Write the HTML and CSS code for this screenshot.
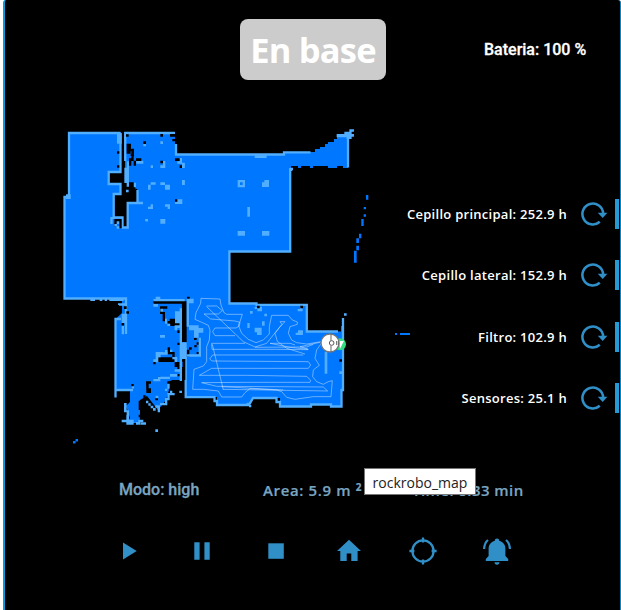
FILE: index.html
```html
<!DOCTYPE html>
<html lang="es">
<head>
<meta charset="utf-8">
<title>rockrobo</title>
<link rel="stylesheet" href="styles.css">
</head>
<body>
<svg class="defs" aria-hidden="true">
  <symbol id="reload" viewBox="0 0 28 28">
    <path d="M19.800 21.700A10.400 10.400 0 1 1 23.200 13.500" fill="none" stroke="currentColor" stroke-width="2.500"/>
    <path d="M17.800 12.800h9.600l-4.700 5.200z" fill="currentColor"/>
  </symbol>
</svg>
<main class="card">
  <header class="header">
    <div class="state"><span>En base</span></div>
    <div class="battery">Bateria: 100 %</div>
  </header>

  <section class="body">
    <svg class="map" viewBox="55 120 345 330" role="img">
      <path class="floor" d="M69 132H121V172H109V184H121V194H114V218H123V227H128V203H138V190L131 185 128 180H125V132H175V154H284V152H315V149H320V147H325V144H328V142H334V139H337V136H348V168H343V166H337V168H328V166H313V168H310V166H301V168H298V166H291V252H229.500V303.500H257V305H307V331.500H341V326H343V390H341V406.500H331V404.500H312V406.500H280V398H253L249 404.500H217V397H185.500V367H181V380H115.500V319L122 313V298H64.500V197H69Z"/>
      <path class="floor" d="M115.500 319V390H130V402L126 406 130 418 127 423H139L140 418V400L147 396 158 410 166 400 169 390 168 382 181 376V370Z"/>
      <!-- Walls -->
      <path class="wall" d="M120.500 133H69V197H64.500V298.500H126V334M118 304.500h8M120.500 133V172H108.700V184H120.500V194H113.700V219M111.500 217V224M113 217.500H122.500V227.500H127.700V203H143M137.500 190V203M125.200 161V133H175M176 144V154.500H284V152.300H310.500M348 167.500V137M291 171V169H293M290.200 168V251.500H229.400V303.500H256.500V304.800H306.800V331.500H338M343 318V390H341.500V406.500H331V404.500H311V406.500H280V402H276.500V398H253L249 405H217V401H214.500V397.200H185.700V348M115.500 397.500V319H121M115.500 390H133"/>
      <!-- Entrance hall -->
      <g transform="translate(55 120) scale(.3333)">
        <path class="light" d="M186 40h14v31h-14zM208 143h14v46h-14zM215 184h7v16h-7zM215 124h7v22h-7zM33 223h14v14H33zM213 209h8v8h-8zM236 188h7v20h-7zM222 86h8v8h-8zM244 122h21v9h-21zM265 71h8v8h-8zM316 64h8v8h-8zM324 123h7v21h-15v-8h8zM287 136h7v8h-7zM374 114h7v14h8v15h-8v-12h-14v-7h7zM287 187h15v7h-15zM279 194h8v15h-8zM316 187h14v8h-14zM330 194h15v15h-15zM381 180h8v15h-8zM367 238h15v14h-22v-7h7zM287 253h7v14h-15v-7h8zM330 253h15v14h-7v-7h-8zM271 297h8v7h-8z"/>
        <path class="void" d="M186 94h7v7h-7zM186 136h7v7h-7zM213 43h8v7h-8zM316 42h8v8h-8zM265 64h8v8h-8zM345 42h15v8h-15zM352 57h8v7h-8zM215 71h13v15h7v8h-8v14h9v14h7v15h-7v-14h-7v14h-7v-22h7v-14h-14zM229 86h8v23h-8zM243 115h16v8h-16zM316 122h8v8h-8zM360 115h14v8h-14zM374 136h7v8h-7zM222 187h14v15h-14zM222 202h20v40h-20zM360 238h7v7h-7z"/>
      </g>
      <!-- Corridor column -->
      <g transform="translate(55 200) scale(.3333)">
        <path class="light" d="M316 57h15v14h-15zM271 57h8v7h-8zM106 296h14v7h-14zM134 296h8v7h-8zM149 296h7v7h-7zM163 296h43v7h-43z"/>
        <path class="void" d="M178 57h22v14h-22zM178 71h7v8h-7zM193 71h7v14h-7z"/>
        <path class="light" d="M185 64h8v8h-8zM178 72h8v7h-8zM185 79h8v7h-8z"/>
      </g>
      <!-- Living room -->
      <g transform="translate(180 120) scale(.3333)">
        <path class="light" d="M224 106h36v8h-36zM173 180h22v22h-22zM253 180h14v21h-21v-14h7zM202 261h8v29h-8zM173 333h22v14h-22zM246 333h22v14h-22zM0 115h6v14h8v15H6v-14H0zM6 180h8v15H6zM470 42h23v-7h15v-7h14v7h-7v7h7v8h-7v7h-15v-5h-30z"/>
        <path class="floor" d="M180 187h8v8h-8zM558 225h7v14h-7zM551 261h7v7h-7zM551 283h7v7h-7zM544 297h7v21h-7zM537 341h7v14h-7zM529 355h8v14h-8zM529 377h8v14h-8zM522 392h8v36h-8z"/>
      </g>
      <!-- Bathroom -->
      <g transform="translate(100 290) scale(.3333)">
        <path class="void" d="M160 30h86v10h-86zM162 33h92v8h-92zM246 34h14v123h-14zM248 205h8v65h-8zM45 45h12v22h-6v14h-9zM180 49h22v7h-14v10h7v21h7v7h-14V72h-8zM202 93h7v-7h30v22h-28v-7h-9zM174 202h50v14h-50zM203 172h7v14h14v15h-7v-8h-14v-7h-7v-7h7zM224 216h15v22h-7v-7h-8zM260 179h8v22h-8zM267 172h8v7h-8zM282 143h8v7h-8zM290 157h7v7h-7zM290 186h7v7h-7zM283 165h7v7h-7zM261 20h8v7h-8zM79 64h8v7h-8zM65 99h7v8h-7zM72 49h8v8h-8zM232 121h8v8h-8zM232 158h8v7h-8zM246 165h8v7h-8zM246 208h8v7h-8zM160 216h7v7h-7zM232 252h8v7h-8zM174 260h7v7h-7zM138 274h15v7h-7v14h7v14h-14zM130 316h7v15h-7zM116 332h8v28h-8zM124 338h7v22h-7zM166 324h8v7h-8zM116 374h8v8h-8zM94 282h7v14h-7zM202 274h7v8h-7z"/>
        <path class="light" d="M160 27h94v7h-94zM160 42h14v8h66v50h-15V64h14V50h-79zM167 20h14v8h-14zM239 55h7v218h-7zM246 157h14v50h-14zM260 26h21v14h-14v70h-7zM267 106h29v8h14v14h-14v15h-14v-22h-15zM296 143h7v57h-42v-7h35zM181 56h8v9h-8zM195 86h7v15h-7zM202 101h8v7h-8zM224 106h15v8h-7v7h-8zM180 135h15v8h-15zM195 179h8v8h-8zM167 186h22v7h-7v9h-7v15h-8zM160 208h8v8h-8zM210 179h7v7h-7zM181 187h22v7h-22zM217 201h15v15h-8v-8h-7zM224 238h15v7h-15zM210 252h22v8h-22v7h-29v7h-21v-7h14v-7h36zM202 281h7v15h-7zM195 296h7v7h-7zM210 302h7v7h7v7h-15v15h-7v15h-22v21h-7v-14h-7v-7h14v-7h15v-15h7v-15h8zM138 332h7v8h7v7h8v7h7v8h-8v-7h-7v-8h-7v-7h-7zM72 339h8v22h7v14h-7v-8h-8zM79 374h8v15h14v7h14v-7h15v7h-8v8h-14v-7h-7v7H79v-7H65v-8h14zM123 397h15v7h-15zM166 418h8v8h-8zM238 302h8v7h-8zM65 71h15v28H65zM65 107h7v26h-7zM94 289h8v7h-8zM167 317h8v8h-8z"/>
      </g>
      <!-- Bedroom -->
      <g transform="translate(180 290) scale(.3333)">
        <path class="light" d="M210 63h8v8h-8zM253 71h8v8h-8zM224 50h22v14h-14v-7h-8zM360 50h8v14h-15v-7h7zM202 99h7v15h-7zM246 94h8v13h-8zM224 113h21v22h-14v-8h-7zM354 121h15v14h-22v-7h7zM434 185h8v66h-8zM492 70h8v7h-8zM478 244h8v8h-8zM200 345h14v7h-7v-14h-7z"/>
        <path class="void" d="M231 47h8v8h-8zM361 47h8v8h-8zM478 208h8v7h-8z"/>
        <path class="route" d="M63 25 62 40 48 68 45 88 65 97 85 106 90 120 88 150 80 170V215L70 228 42 238 40 270 38 298H70L115 303 125 321H185L195 308 210 296 290 300 305 305 320 322 345 328 400 320H453L457 272 445 275 430 283 410 275 398 260 400 240 418 226 405 205 410 180 424 160M63 25 120 27 123 45 132 68 140 73H187L180 95 175 105 185 130 205 148 228 158 250 150 268 132 268 110 275 76H325L337 90 352 96V103L330 110 325 130 335 150 350 158 380 162 424 155M80 50 190 155 225 171 260 160 300 110 315 95H300L306 103 285 130 292 154 320 175 375 192M80 48H110L127 62 115 72H72L92 87 165 93 180 97 178 108 168 114H105L98 125 105 137H165M195 160H95L96 178H290L384 179M270 160 330 172 385 178 360 170 420 157M97 163 130 300M225 172 380 171 400 163M270 160H330L345 165M98 195H370M98 195 89 207 96 213 385 215 392 225 385 235H95L58 256H200L380 259 392 271 390 277H200L65 278 110 289 430 291 443 303 130 298M125 290 310 300"/>
        <circle class="dock" cx="480" cy="163" r="18"/>
        <path d="M478 154l14-2-12 25" fill="#fff"/>
        <circle cx="450" cy="159" r="27" fill="#fff" stroke="#777" stroke-width="4"/>
        <path d="M453 133v19M453 167v18M470 153v12M475 153v12" fill="none" stroke="#666" stroke-width="3"/>
        <circle cx="455" cy="159" r="7" fill="#fff" stroke="#555" stroke-width="3"/>
      </g>
      <path class="floor" d="M395 333h2v2h-2zM73 441h2.500v2.500h-2.500zM75.500 439h2.500v2.500h-2.500z"/>
      <path class="floor" d="M400 333h10v2h-10z"/>
    </svg>

    <ul class="parts">
      <li><span>Cepillo principal: 252.9 h</span><svg><use href="#reload"/></svg><i></i></li>
      <li><span>Cepillo lateral: 152.9 h</span><svg><use href="#reload"/></svg><i></i></li>
      <li><span>Filtro: 102.9 h</span><svg><use href="#reload"/></svg><i></i></li>
      <li><span>Sensores: 25.1 h</span><svg><use href="#reload"/></svg><i></i></li>
    </ul>
  </section>

  <section class="stats">
    <div class="mode">Modo: high</div>
    <div class="area">Area: 5.9 m <sup>2</sup></div>
    <div class="time">Time: 8.33 min</div>
  </section>

  <nav class="controls">
    <svg viewBox="0 0 28 28"><path d="M9 5.500v17L22.700 14z"/></svg>
    <svg viewBox="0 0 28 28"><path d="M6.300 5.200h5.300v17.600H6.300zM16.400 5.200h5.300v17.600h-5.300z"/></svg>
    <svg viewBox="0 0 28 28"><path d="M6.300 6.300h15.500v15.500H6.300z"/></svg>
    <svg viewBox="0 0 28 28"><path d="M14 2.800 26 13.900h-3.400V24h-6.300v-7.600h-4.600V24H5.300V13.900H2z"/></svg>
    <svg viewBox="0 0 28 28"><g fill="none" stroke="currentColor" stroke-width="2.300"><circle cx="14" cy="14" r="10.600"/><path d="M14 .4v5M14 22.600v5M.4 14h5M22.600 14h5"/></g></svg>
    <svg viewBox="0 0 28 28"><path d="M14 1.500c1.300 0 2.200.9 2.200 2.200 4 1.100 6.200 4.100 6.200 8v7.200l2.800 3v2.200H2.800v-2.200l2.800-3v-7.200c0-3.900 2.300-6.900 6.200-8 0-1.300.9-2.200 2.200-2.200zM11.500 25.300h5c0 1.400-1 2.400-2.500 2.400s-2.500-1-2.500-2.400z"/><path d="M5 3C2.500 5 1.200 8 1.100 12M23 3c2.500 2 3.800 5 3.900 9" fill="none" stroke="currentColor" stroke-width="2.200"/></svg>
  </nav>
  <div class="tooltip">rockrobo_map</div>
</main>
</body>
</html>
```

FILE: styles.css
```css
* { box-sizing: border-box; }
body {
  margin: 0;
  background: #fff;
  font-family: "Open Sans", "Noto Sans", sans-serif;
  overflow: hidden;
}
.defs { position: absolute; width: 0; height: 0; }
.card {
  position: relative;
  height: 610px;
  margin-left: 3px;
  background: #000;
  border-left: 2px solid #0a9ad9;
  border-right: 1px solid #0a86c4;
  border-radius: 3px 3px 0 0;
}
.header {
  display: grid;
  grid-template-columns: 1fr 146px 1fr;
  height: 120px;
  padding: 19px 0 0 1px;
}
.state {
  grid-column: 2;
  display: flex;
  align-items: center;
  justify-content: center;
  height: 61px;
  border-radius: 8px;
  background: #ccc;
  color: #fff;
  font-size: 34.500px;
  font-weight: 700;
  letter-spacing: -0.800px;
  white-space: nowrap;
}
.battery {
  height: 61px;
  padding-left: 98px;
  color: #fff;
  font: 500 16px/61px Roboto, sans-serif;
  -webkit-text-stroke: 0.3px;
  white-space: nowrap;
}
.body {
  display: flex;
  height: 330px;
  padding-left: 50px;
}
.map {
  flex: none;
  width: 345px;
  height: 330px;
  overflow: visible;
}
.floor { fill: #0077ff; }
.light { fill: #52aeff; }
.wall { fill: none; stroke: #52aeff; stroke-width: 2.3; }
.void { fill: #000; }
.route { fill: none; stroke: #d5e9ff; stroke-width: 2; stroke-opacity: .75; }
.dock { fill: #32dc82; }
.parts {
  flex: 1;
  margin: 63.500px 1px 0 0;
  padding: 0;
  list-style: none;
  color: #fff;
  font-size: 13px;
  font-weight: 600;
  letter-spacing: .280px;
}
.parts li {
  display: flex;
  align-items: center;
  justify-content: flex-end;
  height: 61.300px;
  white-space: nowrap;
}
.parts svg {
  width: 28px;
  height: 28px;
  margin: 0 7px 0 13px;
  color: #318fc8;
}
.parts i {
  width: 4px;
  height: 30px;
  background: #259bd5;
}
.stats {
  display: grid;
  grid-template-columns: 144px 149px 1fr;
  height: 80px;
  padding-left: 114px;
  color: #7aa5c0;
  font-size: 15px;
  font-weight: 600;
  line-height: 80px;
  white-space: nowrap;
}
.mode {
  font: 500 16px/80px Roboto, sans-serif;
  -webkit-text-stroke: 0.3px;
}
.area {
  letter-spacing: .630px;
  -webkit-text-stroke: 0.2px;
}
.time {
  letter-spacing: .450px;
  -webkit-text-stroke: 0.2px;
}
.stats sup {
  position: relative;
  top: 1px;
  font-size: 10px;
  font-weight: 700;
  line-height: 0;
}
.controls {
  display: grid;
  grid-template-columns: repeat(6, 73.700px);
  height: 42px;
  padding-left: 86.500px;
  align-items: center;
  justify-items: center;
  color: #318fc8;
}
.controls svg {
  width: 28px;
  height: 28px;
  fill: currentColor;
}
.tooltip {
  position: absolute;
  left: 359px;
  top: 468px;
  width: 112px;
  height: 27px;
  border: 1px solid #767676;
  background: #fff;
  color: #222;
  font-size: 14px;
  line-height: 27px;
  text-align: center;
}
```
